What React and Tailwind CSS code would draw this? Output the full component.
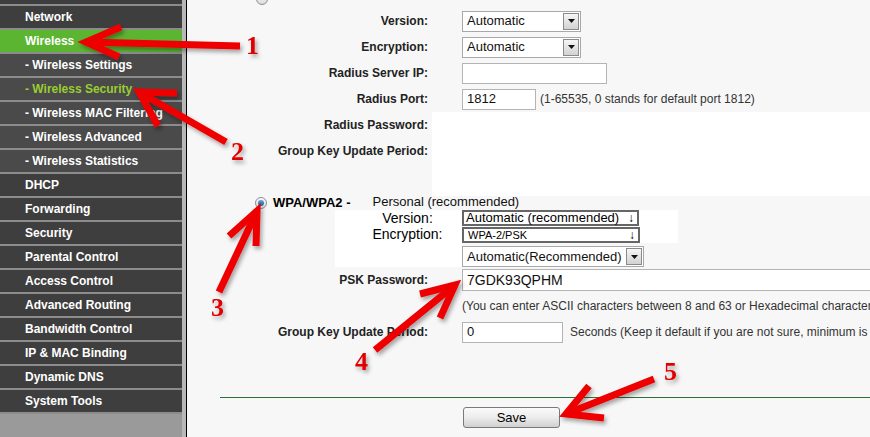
import React from 'react';

const menu = [
  { label: 'Network', type: 'main' },
  { label: 'Wireless', type: 'active' },
  { label: '- Wireless Settings', type: 'sub' },
  { label: '- Wireless Security', type: 'subActive' },
  { label: '- Wireless MAC Filtering', type: 'sub' },
  { label: '- Wireless Advanced', type: 'sub' },
  { label: '- Wireless Statistics', type: 'sub' },
  { label: 'DHCP', type: 'main' },
  { label: 'Forwarding', type: 'main' },
  { label: 'Security', type: 'main' },
  { label: 'Parental Control', type: 'main' },
  { label: 'Access Control', type: 'main' },
  { label: 'Advanced Routing', type: 'main' },
  { label: 'Bandwidth Control', type: 'main' },
  { label: 'IP & MAC Binding', type: 'main' },
  { label: 'Dynamic DNS', type: 'main' },
  { label: 'System Tools', type: 'main' },
];

const rowStyles = {
  main: 'bg-[#3e3e3e] text-white',
  active: 'bg-[#5cb531] text-white',
  sub: 'bg-[#4a4a4a] text-white',
  subActive: 'bg-[#4a4a4a] text-[#9acd32]',
};

function DropBtn() {
  return (
    <span className="w-[16px] h-[17px] mr-[1px] border border-[#8a8a8a] bg-gradient-to-b from-[#f6f6f6] to-[#d2d2d2] flex items-center justify-center">
      <svg width="7" height="4" viewBox="0 0 7 4">
        <path d="M0 0h7L3.5 4z" fill="#111" />
      </svg>
    </span>
  );
}

function Select({ value, width }) {
  return (
    <div className={`h-[21px] border border-[#a8a8a8] bg-white flex items-center shrink-0 ${width}`}>
      <span className="flex-1 pl-[4px] text-[13px] text-[#111] whitespace-nowrap">{value}</span>
      <DropBtn />
    </div>
  );
}

function Input({ value, width }) {
  return (
    <div className={`h-[21px] border border-[#b4b4b4] bg-white flex items-center shrink-0 pl-[4px] text-[13px] text-[#111] ${width}`}>
      {value}
    </div>
  );
}

function Row({ label, children }) {
  return (
    <div className="h-[26px] flex items-center shrink-0">
      <div className="w-[241px] shrink-0 text-right font-bold text-[12px] text-[#222] whitespace-nowrap">{label}</div>
      <div className="ml-[34px] flex-1 min-w-0 overflow-hidden h-full flex items-center gap-[4px]">{children}</div>
    </div>
  );
}

function Radio({ checked }) {
  return (
    <span className="w-[12px] h-[12px] rounded-full border border-[#8d8d8d] bg-gradient-to-b from-[#fafafa] to-[#dcdcdc] flex items-center justify-center">
      {checked && <span className="w-[6px] h-[6px] rounded-full bg-gradient-to-b from-[#5aa8e0] to-[#1c5f99]" />}
    </span>
  );
}

function Arrow({ tip, tail, a, b }) {
  return (
    <g>
      <line x1={tail[0]} y1={tail[1]} x2={tip[0]} y2={tip[1]} />
      <polyline points={`${a[0]},${a[1]} ${tip[0]},${tip[1]} ${b[0]},${b[1]}`} />
    </g>
  );
}

export default function App() {
  return (
    <div className="w-[870px] h-[437px] overflow-hidden relative flex font-['Liberation_Sans',Arial,sans-serif]">
      {/* Sidebar */}
      <aside className="w-[187px] flex shrink-0">
        <div className="w-[182px] bg-[#9a9a9a] flex flex-col">
          <div className="h-[4px] bg-[#3e3e3e]" />
          {menu.map((item) => (
            <div key={item.label} className="border-t-2 border-[#8c8c8c]">
              <div className={`h-[22px] flex items-center pl-[25px] text-[12px] font-bold whitespace-nowrap overflow-hidden ${rowStyles[item.type]}`}>
                {item.label}
              </div>
            </div>
          ))}
          <div className="h-[2px] bg-[#8c8c8c]" />
        </div>
        <div className="w-[4px] bg-[#b8b8b8]" />
        <div className="w-[1px] bg-black" />
      </aside>

      {/* Main */}
      <main className="flex-1 min-w-0 bg-[#f7f7f7] flex flex-col overflow-hidden">
        <div className="h-[8px] relative shrink-0">
          <span className="absolute left-[69px] -top-[7px]"><Radio /></span>
        </div>
        <Row label="Version:"><Select value="Automatic" width="w-[119px]" /></Row>
        <Row label="Encryption:"><Select value="Automatic" width="w-[119px]" /></Row>
        <Row label="Radius Server IP:"><Input value="" width="w-[145px]" /></Row>
        <Row label="Radius Port:">
          <Input value="1812" width="w-[74px]" />
          <span className="text-[12px] text-[#333] whitespace-nowrap">(1-65535, 0 stands for default port 1812)</span>
        </Row>
        <div className="flex shrink-0">
          <div className="w-[245px] flex flex-col">
            <div className="h-[26px] flex items-center justify-end font-bold text-[12px] text-[#222] pr-[4px]">Radius Password:</div>
            <div className="h-[26px] flex items-center justify-end font-bold text-[12px] text-[#222] pr-[4px]">Group Key Update Period:</div>
            <div className="h-[32px]" />
          </div>
          <div className="flex-1 bg-white" />
        </div>

        {/* WPA/WPA2 */}
        <div className="h-[14px] flex items-center shrink-0">
          <span className="ml-[68px]"><Radio checked /></span>
          <span className="ml-[6px] font-bold text-[13px] text-black">WPA/WPA2 -</span>
          <span className="ml-[22px] text-[13px] text-[#111] -mt-[2px]">Personal (recommended)</span>
        </div>
        <div className="flex shrink-0">
          <div className="ml-[148px] w-[127px] bg-white flex flex-col">
            <div className="h-[16px] flex items-center justify-center pl-[18px] text-[14px] text-black">Version:</div>
            <div className="h-[17px] flex items-center justify-center pl-[18px] text-[14px] text-black">Encryption:</div>
            <div className="h-[24px]" />
          </div>
          <div className="flex flex-col">
            <div className="w-[216px] bg-white flex flex-col gap-[1px]">
              <div className="w-[177px] h-[16px] border-2 border-[#666] bg-white flex items-center justify-between pl-[2px] pr-[3px] text-[13px] text-black whitespace-nowrap">
                Automatic (recommended)<span className="text-[12px] font-bold">↓</span>
              </div>
              <div className="w-[178px] h-[16px] border-2 border-[#666] bg-white flex items-center justify-between pl-[4px] pr-[3px] text-[11px] text-black">
                WPA-2/PSK<span className="text-[12px] font-bold">↓</span>
              </div>
            </div>
            <div className="mt-[3px]">
              <Select value="Automatic(Recommended)" width="w-[182px]" />
            </div>
          </div>
        </div>
        <Row label="PSK Password:"><Input value="7GDK93QPHM" width="w-[420px] h-[22px] text-[14px]" /></Row>
        <Row label="">
          <span className="text-[12px] text-[#333] whitespace-nowrap">(You can enter ASCII characters between 8 and 63 or Hexadecimal characters)</span>
        </Row>
        <Row label="Group Key Update Period:">
          <Input value="0" width="w-[101px]" />
          <span className="ml-[3px] text-[12px] text-[#333] whitespace-nowrap">Seconds (Keep it default if you are not sure, minimum is 30)</span>
        </Row>
        <div className="h-[52px] shrink-0" />
        <div className="ml-[33px] h-[1px] bg-[#2f6f35] shrink-0" />
        <div className="h-[9px] shrink-0" />
        <div className="ml-[276px]">
          <button className="w-[97px] h-[21px] border border-[#7a7a7a] rounded-[3px] bg-gradient-to-b from-[#fafafa] via-[#ececec] to-[#d0d0d0] text-[13px] text-black flex items-center justify-center">
            Save
          </button>
        </div>
      </main>

      {/* Annotation overlay */}
      <svg className="absolute inset-0 pointer-events-none" width="870" height="437" viewBox="0 0 870 437">
        <defs>
          <filter id="sh" x="-20%" y="-20%" width="140%" height="140%">
            <feDropShadow dx="2" dy="3" stdDeviation="2" floodColor="#000" floodOpacity="0.35" />
          </filter>
        </defs>
        <g stroke="#ee0000" strokeWidth="7" strokeLinecap="butt" strokeLinejoin="miter" fill="none" filter="url(#sh)">
          <Arrow tip={[86, 42]} tail={[240, 46]} a={[121, 27]} b={[119, 57]} />
          <Arrow tip={[139, 92]} tail={[226, 142]} a={[177, 93]} b={[158, 126]} />
          <Arrow tip={[257, 211]} tail={[219, 292]} a={[256, 246]} b={[229, 236]} />
          <Arrow tip={[455, 285]} tail={[375, 350]} a={[440, 318]} b={[420, 294]} />
          <Arrow tip={[566, 414]} tail={[654, 379]} a={[589, 386]} b={[604, 418]} />
        </g>
        <g fill="#e00000" fontFamily="'Liberation Serif', 'Times New Roman', serif" fontWeight="bold" fontSize="26" filter="url(#sh)">
          <text x="246" y="54">1</text>
          <text x="231" y="160">2</text>
          <text x="211" y="316">3</text>
          <text x="355" y="370">4</text>
          <text x="664" y="380">5</text>
        </g>
      </svg>
    </div>
  );
}
